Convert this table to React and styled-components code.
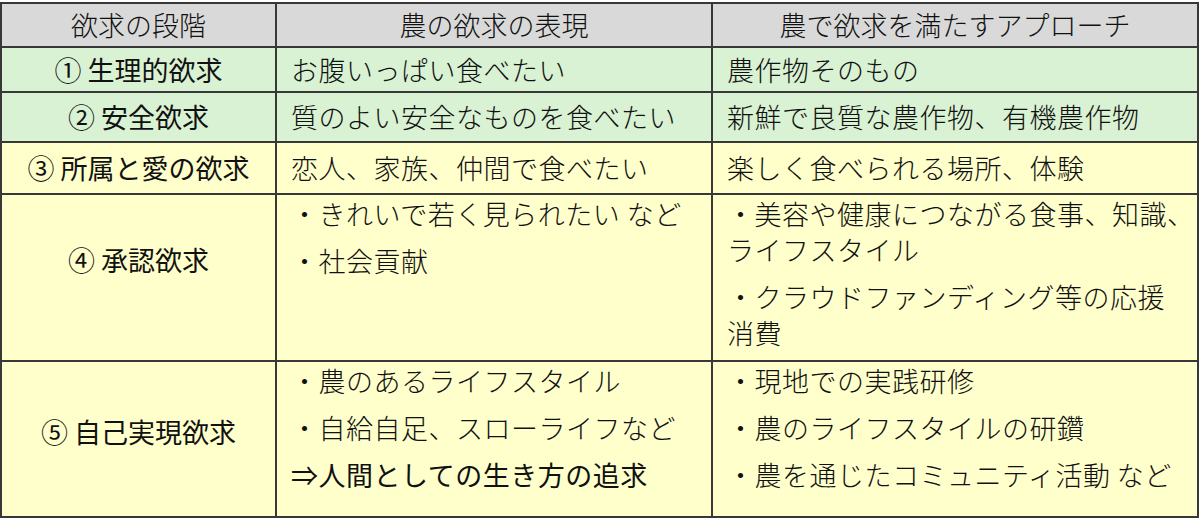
import React from "react";
import styled, { createGlobalStyle } from "styled-components";

const Global = createGlobalStyle`
  body {
    margin: 0;
    background: #ffffff;
    font-family: "Noto Sans CJK JP", "Noto Sans", sans-serif;
    color: #111;
  }
`;

const Table = styled.div`
  margin-top: 2px;
  width: 1199px;
  box-sizing: border-box;
  display: grid;
  grid-template-columns: 273px 434px 484px;
  grid-template-rows: 42px 43px 48px 50px 165px 154px;
  gap: 2px;
  padding: 2px;
  background: #383838;
`;

const Cell = styled.div`
  background: ${p => p.$bg};
  display: flex;
  flex-direction: column;
  justify-content: ${p => (p.$top ? "flex-start" : "center")};
  align-items: ${p => (p.$center ? "center" : "flex-start")};
  padding: ${p => (p.$top ? "1px 0 0 14px" : p.$center ? "0" : "0 0 0 14px")};
  padding-bottom: ${p => p.$lift || 0}px;
  font-size: 27px;
  letter-spacing: ${p => (p.$center ? "0" : "0.5px")};
  font-weight: ${p => (p.$bold ? 400 : 300)};
  white-space: nowrap;
  line-height: 36px;
`;

const Line = styled.div`
  margin-bottom: 11px;
  font-weight: ${p => (p.$bold ? 400 : 300)};
`;

const GRAY = "#d9d9d9";
const GREEN = "#d9f2d4";
const YELLOW = "#ffffcc";

const Head = ({ children }) => (
  <Cell $bg={GRAY} $center>
    {children}
  </Cell>
);

const App = () => (
  <>
    <Global />
    <Table>
      <Head>欲求の段階</Head>
      <Head>農の欲求の表現</Head>
      <Head>農で欲求を満たすアプローチ</Head>

      <Cell $bg={GREEN} $center $bold>① 生理的欲求</Cell>
      <Cell $bg={GREEN}>お腹いっぱい食べたい</Cell>
      <Cell $bg={GREEN}>農作物そのもの</Cell>

      <Cell $bg={GREEN} $center $bold>② 安全欲求</Cell>
      <Cell $bg={GREEN}>質のよい安全なものを食べたい</Cell>
      <Cell $bg={GREEN}>新鮮で良質な農作物、有機農作物</Cell>

      <Cell $bg={YELLOW} $center $bold>③ 所属と愛の欲求</Cell>
      <Cell $bg={YELLOW}>恋人、家族、仲間で食べたい</Cell>
      <Cell $bg={YELLOW}>楽しく食べられる場所、体験</Cell>

      <Cell $bg={YELLOW} $center $bold $lift={36}>④ 承認欲求</Cell>
      <Cell $bg={YELLOW} $top>
        <Line>・きれいで若く見られたい など</Line>
        <Line>・社会貢献</Line>
      </Cell>
      <Cell $bg={YELLOW} $top>
        <Line>
          ・美容や健康につながる食事、知識、
          <br />
          ライフスタイル
        </Line>
        <Line>
          ・クラウドファンディング等の応援
          <br />
          消費
        </Line>
      </Cell>

      <Cell $bg={YELLOW} $center $bold $lift={14}>⑤ 自己実現欲求</Cell>
      <Cell $bg={YELLOW} $top>
        <Line>・農のあるライフスタイル</Line>
        <Line>・自給自足、スローライフなど</Line>
        <Line $bold>⇒人間としての生き方の追求</Line>
      </Cell>
      <Cell $bg={YELLOW} $top>
        <Line>・現地での実践研修</Line>
        <Line>・農のライフスタイルの研鑽</Line>
        <Line>・農を通じたコミュニティ活動 など</Line>
      </Cell>
    </Table>
  </>
);

export default App;
